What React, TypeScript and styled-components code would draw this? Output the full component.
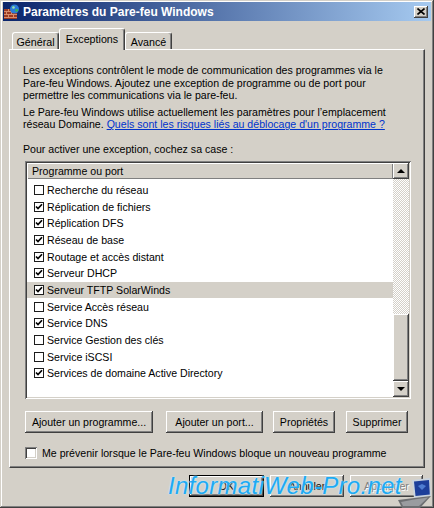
import React from 'react';
import styled, { createGlobalStyle } from 'styled-components';

const Global = createGlobalStyle`
  html, body { margin: 0; padding: 0; background: #d4d0c8; }
  body {
    font-family: 'Liberation Sans', Arial, sans-serif;
    font-size: 10.6px;
    color: #000;
  }
  * { box-sizing: border-box; }
`;

const raised = `
  background: #d4d0c8;
  box-shadow: inset -1px -1px #404040, inset 1px 1px #fff, inset -2px -2px #808080, inset 2px 2px #d4d0c8;
`;

const Window = styled.div`
  position: relative;
  width: 434px;
  height: 508px;
  background: #d4d0c8;
  padding: 2px 3px 3px 3px;
  display: flex;
  flex-direction: column;
  overflow: hidden;
  box-shadow: inset -1px -1px #404040, inset 1px 1px #d4d0c8, inset -2px -2px #808080, inset 2px 2px #fff;
`;

const TitleBar = styled.div`
  height: 19px;
  display: flex;
  align-items: center;
  padding: 0 3px 0 1px;
  background: linear-gradient(to right, #0a246a 0%, #a6caf0 100%);
`;

const TitleText = styled.span`
  flex: 1;
  margin-left: 3px;
  color: #fff;
  font-weight: bold;
  font-size: 12px;
  white-space: nowrap;
`;

const CloseButton = styled.div`
  ${raised}
  width: 14px;
  height: 12px;
  display: flex;
  align-items: center;
  justify-content: center;
`;

const TabStrip = styled.div`
  margin-top: 7px;
  height: 21px;
  display: flex;
  align-items: flex-end;
  padding-left: 9px;
  position: relative;
  z-index: 2;
`;

const Tab = styled.div<{ $active?: boolean; $w: number }>`
  width: ${(p) => p.$w}px;
  height: ${(p) => (p.$active ? 22 : 17)}px;
  margin-bottom: ${(p) => (p.$active ? -1 : 0)}px;
  background: #d4d0c8;
  border-top: 1px solid #fff;
  border-left: 1px solid #fff;
  border-right: 1px solid #404040;
  border-radius: 3px 3px 0 0;
  box-shadow: inset -1px 0 #808080;
  display: flex;
  justify-content: center;
  padding-top: ${(p) => (p.$active ? 4 : 3)}px;
  white-space: nowrap;
  font-size: 10.7px;
`;

const Panel = styled.div`
  margin: 0 6px;
  height: 419px;
  border: 1px solid;
  border-color: #fff #404040 #404040 #fff;
  box-shadow: inset -1px -1px #808080;
  padding: 14px 13px 0 13px;
  display: flex;
  flex-direction: column;
`;

const Para = styled.p<{ $mt?: number }>`
  margin: ${(p) => p.$mt ?? 0}px 0 0 0;
  line-height: 12.6px;
  white-space: nowrap;
`;

const Link = styled.a`
  color: #0033cc;
  text-decoration: underline;
`;

const ListBox = styled.div`
  margin: 5px 0 0 2px;
  width: 386px;
  height: 238px;
  background: #fff;
  padding: 2px;
  display: flex;
  box-shadow: inset 1px 1px #808080, inset -1px -1px #fff, inset 2px 2px #404040, inset -2px -2px #d4d0c8;
`;

const ListContent = styled.div`
  flex: 1;
  display: flex;
  flex-direction: column;
  overflow: hidden;
`;

const Header = styled.div`
  height: 16px;
  background: #d4d0c8;
  display: flex;
  align-items: center;
  padding-left: 5px;
  box-shadow: inset 1px 1px #fff, inset -1px -1px #808080;
  white-space: nowrap;
`;

const Rows = styled.div`
  padding-top: 3px;
  display: flex;
  flex-direction: column;
`;

const Row = styled.div<{ $sel?: boolean }>`
  height: 16.7px;
  display: flex;
  align-items: center;
  gap: 3px;
  padding-left: 7px;
  background: ${(p) => (p.$sel ? '#d4d0c8' : 'transparent')};
  white-space: nowrap;
`;

const FlatCheck = styled.span`
  width: 10px;
  height: 10px;
  border: 1px solid #1c1c1c;
  background: #fff;
  display: flex;
  align-items: center;
  justify-content: center;
  flex: none;
`;

const ScrollBar = styled.div`
  width: 16px;
  display: flex;
  flex-direction: column;
`;

const ScrollButton = styled.div`
  ${raised}
  width: 16px;
  height: 16px;
  display: flex;
  align-items: center;
  justify-content: center;
`;

const Arrow = styled.span<{ $down?: boolean }>`
  width: 0;
  height: 0;
  border-left: 4px solid transparent;
  border-right: 4px solid transparent;
  ${(p) => (p.$down ? 'border-top: 4px solid #000;' : 'border-bottom: 4px solid #000;')}
`;

const Track = styled.div`
  flex: 1;
  background: repeating-conic-gradient(#d4d0c8 0% 25%, #ffffff 0% 50%) 0 0 / 2px 2px;
`;

const Thumb = styled.div`
  ${raised}
  height: 67px;
`;

const ButtonRow = styled.div`
  margin: 12px 0 0 2px;
  display: flex;
`;

const Button = styled.button<{ $w: number; $ml?: number; $default?: boolean; $disabled?: boolean }>`
  ${raised}
  width: ${(p) => p.$w}px;
  height: 22px;
  margin-left: ${(p) => p.$ml ?? 0}px;
  border: ${(p) => (p.$default ? '1px solid #000' : 'none')};
  padding: 0;
  font-family: 'Liberation Sans', Arial, sans-serif;
  font-size: 10.6px;
  color: ${(p) => (p.$disabled ? '#808080' : '#000')};
  text-shadow: ${(p) => (p.$disabled ? '1px 1px #fff' : 'none')};
  white-space: nowrap;
`;

const CheckLine = styled.label`
  margin: 14px 0 0 2px;
  display: flex;
  align-items: center;
  gap: 5px;
  white-space: nowrap;
`;

const SunkenCheck = styled.span`
  width: 12px;
  height: 12px;
  background: #fff;
  box-shadow: inset 1px 1px #808080, inset -1px -1px #fff, inset 2px 2px #404040, inset -2px -2px #d4d0c8;
`;

const Footer = styled.div`
  margin-top: 7px;
  display: flex;
  justify-content: flex-end;
  gap: 6px;
  padding-right: 8px;
`;

const Watermark = styled.div`
  position: absolute;
  left: 168px;
  top: 472px;
  font-family: 'Liberation Sans', Arial, sans-serif;
  font-style: italic;
  font-size: 24px;
  letter-spacing: 0.3px;
  color: #1eaaf2;
  text-shadow: 0 0 2px #c8eeff, 0 0 1px #c8eeff;
  white-space: nowrap;
  pointer-events: none;
`;

const Laptop = styled.svg`
  position: absolute;
  left: 398px;
  top: 478px;
`;

const Check = () => (
  <svg width="8" height="8" viewBox="0 0 8 8">
    <path d="M1 3.5 L3 5.6 L7 1.2" stroke="#000" strokeWidth="1.7" fill="none" />
  </svg>
);

const rows: { label: string; checked: boolean; sel?: boolean }[] = [
  { label: 'Recherche du réseau', checked: false },
  { label: 'Réplication de fichiers', checked: true },
  { label: 'Réplication DFS', checked: true },
  { label: 'Réseau de base', checked: true },
  { label: 'Routage et accès distant', checked: true },
  { label: 'Serveur DHCP', checked: true },
  { label: 'Serveur TFTP SolarWinds', checked: true, sel: true },
  { label: 'Service Accès réseau', checked: false },
  { label: 'Service DNS', checked: true },
  { label: 'Service Gestion des clés', checked: false },
  { label: 'Service iSCSI', checked: false },
  { label: 'Services de domaine Active Directory', checked: true },
];

const FirewallIcon = () => (
  <svg width="16" height="16" viewBox="0 0 16 16">
    <rect x="0" y="5" width="13" height="10" fill="#9c3a22" />
    <g stroke="#d98c6c" strokeWidth="1">
      <line x1="0" y1="7.5" x2="13" y2="7.5" />
      <line x1="0" y1="10.5" x2="13" y2="10.5" />
      <line x1="0" y1="13.5" x2="13" y2="13.5" />
      <line x1="4.5" y1="5" x2="4.5" y2="7.5" />
      <line x1="9.5" y1="5" x2="9.5" y2="7.5" />
      <line x1="2.5" y1="7.5" x2="2.5" y2="10.5" />
      <line x1="7.5" y1="7.5" x2="7.5" y2="10.5" />
      <line x1="4.5" y1="10.5" x2="4.5" y2="13.5" />
      <line x1="9.5" y1="10.5" x2="9.5" y2="13.5" />
    </g>
    <circle cx="10.5" cy="5" r="4.5" fill="#2a7bd8" />
    <path d="M8 2.5 Q10 1.5 11 3 Q10 5 8.5 5 Z M11.5 5 Q13.5 4.5 14.5 6 Q13 8.5 11.5 8 Z" fill="#3fb548" />
    <circle cx="9.5" cy="3.5" r="1.3" fill="#bfe3ff" opacity="0.7" />
  </svg>
);

export default function App() {
  return (
    <>
      <Global />
      <Window>
        <TitleBar>
          <FirewallIcon />
          <TitleText>Paramètres du Pare-feu Windows</TitleText>
          <CloseButton>
            <svg width="8" height="7" viewBox="0 0 8 7">
              <path d="M0.5 0.5 L7.5 6.5 M7.5 0.5 L0.5 6.5" stroke="#000" strokeWidth="1.6" />
            </svg>
          </CloseButton>
        </TitleBar>
        <TabStrip>
          <Tab $w={47}>Général</Tab>
          <Tab $w={66} $active>Exceptions</Tab>
          <Tab $w={47}>Avancé</Tab>
        </TabStrip>
        <Panel>
          <Para>
            Les exceptions contrôlent le mode de communication des programmes via le
            <br />
            Pare-feu Windows. Ajoutez une exception de programme ou de port pour
            <br />
            permettre les communications via le pare-feu.
          </Para>
          <Para $mt={4}>
            Le Pare-feu Windows utilise actuellement les paramètres pour l’emplacement
            <br />
            réseau Domaine. <Link>Quels sont les risques liés au déblocage d'un programme ?</Link>
          </Para>
          <Para $mt={12}>Pour activer une exception, cochez sa case :</Para>
          <ListBox>
            <ListContent>
              <Header>Programme ou port</Header>
              <Rows>
                {rows.map((r) => (
                  <Row key={r.label} $sel={r.sel}>
                    <FlatCheck>{r.checked && <Check />}</FlatCheck>
                    {r.label}
                  </Row>
                ))}
              </Rows>
            </ListContent>
            <ScrollBar>
              <ScrollButton>
                <Arrow />
              </ScrollButton>
              <Track />
              <Thumb />
              <ScrollButton>
                <Arrow $down />
              </ScrollButton>
            </ScrollBar>
          </ListBox>
          <ButtonRow>
            <Button $w={128}>Ajouter un programme...</Button>
            <Button $w={97} $ml={13}>Ajouter un port...</Button>
            <Button $w={62} $ml={10}>Propriétés</Button>
            <Button $w={62} $ml={11}>Supprimer</Button>
          </ButtonRow>
          <CheckLine>
            <SunkenCheck />
            Me prévenir lorsque le Pare-feu Windows bloque un nouveau programme
          </CheckLine>
        </Panel>
        <Footer>
          <Button $w={75} $default>OK</Button>
          <Button $w={74}>Annuler</Button>
          <Button $w={73} $disabled>Appliquer</Button>
        </Footer>
        <Watermark>InformatiWeb-Pro.net</Watermark>
        <Laptop width="34" height="30" viewBox="0 0 34 30">
          <polygon points="14,2 32,0 33,18 16,20" fill="#c9d3de" />
          <polygon points="16,3.5 31,2 31.8,16.5 17.5,18" fill="#1d3f9a" />
          <path d="M20 8 L24 6 L28 8 L24 12 Z" fill="#5d8fe0" opacity="0.8" />
          <polygon points="0,22 16,20 33,18 22,30 4,30" fill="#6d6f72" />
          <polygon points="3,24 16,21.5 30,19.5 21,28 5,28" fill="#9a9ca0" />
        </Laptop>
      </Window>
    </>
  );
}
